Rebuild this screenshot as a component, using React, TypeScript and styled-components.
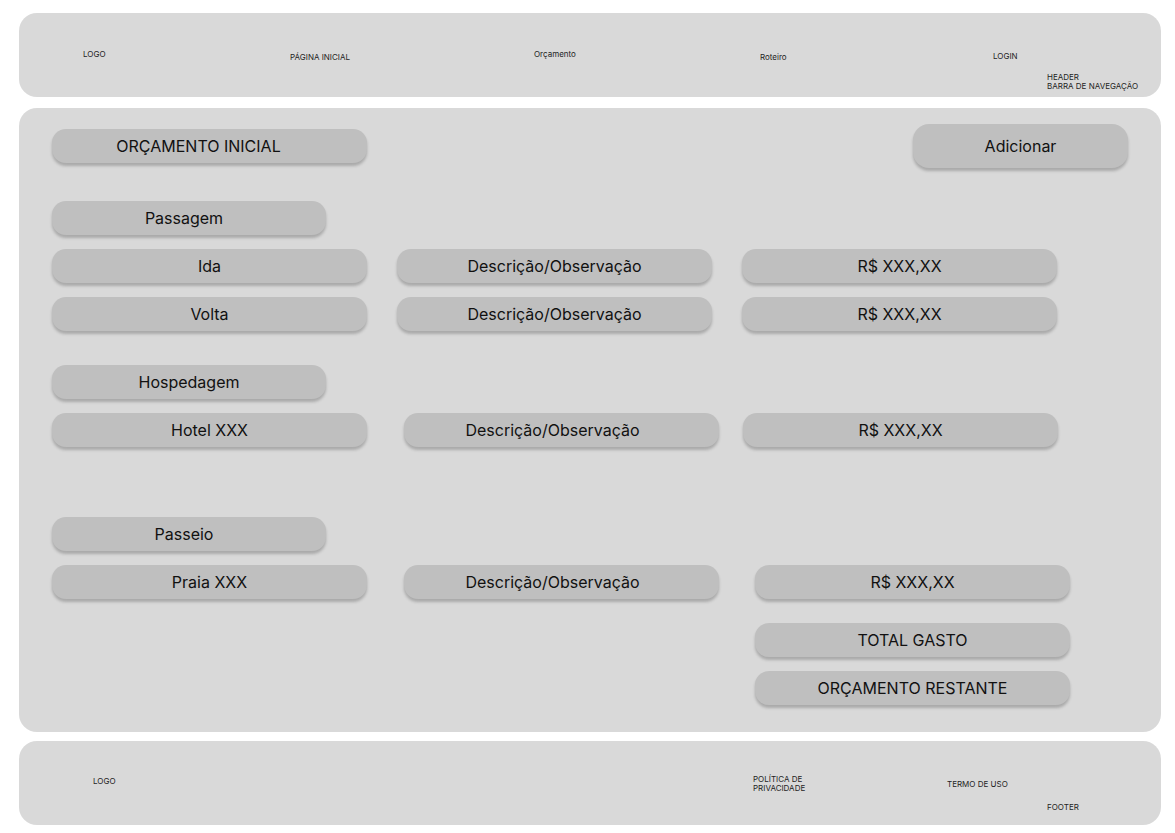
import React from "react";
import styled, { createGlobalStyle } from "styled-components";

const GlobalStyle = createGlobalStyle`
  html, body { margin: 0; padding: 0; background: #ffffff; }
  body {
    font-family: Inter, "Noto Sans", "Liberation Sans", sans-serif;
    color: #1a1a1a;
    -webkit-font-smoothing: antialiased;
  }
`;

const Page = styled.div`
  display: flex;
  flex-direction: column;
  width: 1142px;
  padding: 13px 0 8px 19px;
`;

const Panel = styled.section<{ $h: number; $mt?: number }>`
  box-sizing: border-box;
  height: ${(p) => p.$h}px;
  margin-top: ${(p) => p.$mt ?? 0}px;
  background: #d9d9d9;
  border-radius: 18px;
`;

const Bar = styled(Panel)<{ $cols: string; $pl: number }>`
  display: grid;
  grid-template-columns: ${(p) => p.$cols};
  padding-left: ${(p) => p.$pl}px;
  align-items: start;
`;

const BarText = styled.div<{ $top: number }>`
  margin-top: ${(p) => p.$top}px;
  font-size: 8px;
  line-height: 9px;
  color: #1e1e1e;
  white-space: nowrap;
`;

const Main = styled(Panel)`
  display: flex;
  flex-direction: column;
  padding: 16px 33px 27px;
`;

const TopRow = styled.div`
  display: flex;
  justify-content: space-between;
  align-items: center;
  height: 44px;
`;

const Group = styled.div<{ $mt: number }>`
  display: flex;
  flex-direction: column;
  gap: 14px;
  margin-top: ${(p) => p.$mt}px;
`;

const Row = styled.div`
  display: flex;
`;

const Pill = styled.div<{ $w?: number; $h?: number; $ml?: number; $shift?: number }>`
  box-sizing: border-box;
  flex: none;
  width: ${(p) => p.$w ?? 315}px;
  height: ${(p) => p.$h ?? 34}px;
  margin-left: ${(p) => p.$ml ?? 0}px;
  padding-right: ${(p) => (p.$shift ?? 0) * 2}px;
  display: flex;
  align-items: center;
  justify-content: center;
  background: #bfbfbf;
  border-radius: ${(p) => ((p.$h ?? 34) > 40 ? 16 : 14)}px;
  box-shadow: 0 3px 3px rgba(0, 0, 0, 0.22);
  font-size: 16px;
  color: #111;
  white-space: nowrap;
`;

type Item = { label: string; ml?: number; shift?: number };

const ItemRow = ({ items }: { items: Item[] }) => (
  <Row>
    {items.map((it, i) => (
      <Pill key={i} $ml={it.ml} $shift={it.shift}>
        {it.label}
      </Pill>
    ))}
  </Row>
);

export default function App() {
  return (
    <>
      <GlobalStyle />
      <Page>
        <Bar as="header" $h={84} $pl={64} $cols="207px 244px 226px 233px 54px 1fr">
          <BarText $top={37}>LOGO</BarText>
          <BarText $top={40}>PÁGINA INICIAL</BarText>
          <BarText $top={37}>Orçamento</BarText>
          <BarText $top={40}>Roteiro</BarText>
          <BarText $top={39}>LOGIN</BarText>
          <BarText $top={60}>
            HEADER
            <br />
            BARRA DE NAVEGAÇÃO
          </BarText>
        </Bar>

        <Main as="main" $h={624} $mt={11}>
          <TopRow>
            <Pill $shift={11}>ORÇAMENTO INICIAL</Pill>
            <Pill $w={215} $h={44}>Adicionar</Pill>
          </TopRow>

          <Group $mt={33}>
            <Pill $w={274} $shift={5}>Passagem</Pill>
            <ItemRow
              items={[
                { label: "Ida" },
                { label: "Descrição/Observação", ml: 30 },
                { label: "R$ XXX,XX", ml: 30 },
              ]}
            />
            <ItemRow
              items={[
                { label: "Volta" },
                { label: "Descrição/Observação", ml: 30 },
                { label: "R$ XXX,XX", ml: 30 },
              ]}
            />
          </Group>

          <Group $mt={34}>
            <Pill $w={274}>Hospedagem</Pill>
            <ItemRow
              items={[
                { label: "Hotel XXX" },
                { label: "Descrição/Observação", ml: 37, shift: 9 },
                { label: "R$ XXX,XX", ml: 24 },
              ]}
            />
          </Group>

          <Group $mt={70}>
            <Pill $w={274} $shift={5}>Passeio</Pill>
            <ItemRow
              items={[
                { label: "Praia XXX" },
                { label: "Descrição/Observação", ml: 37, shift: 9 },
                { label: "R$ XXX,XX", ml: 36 },
              ]}
            />
          </Group>

          <Group $mt={24}>
            <Pill $ml={703}>TOTAL GASTO</Pill>
            <Pill $ml={703}>ORÇAMENTO RESTANTE</Pill>
          </Group>
        </Main>

        <Bar as="footer" $h={84} $mt={9} $pl={74} $cols="660px 194px 100px 1fr">
          <BarText $top={36}>LOGO</BarText>
          <BarText $top={34}>
            POLÍTICA DE
            <br />
            PRIVACIDADE
          </BarText>
          <BarText $top={39}>TERMO DE USO</BarText>
          <BarText $top={62}>FOOTER</BarText>
        </Bar>
      </Page>
    </>
  );
}
